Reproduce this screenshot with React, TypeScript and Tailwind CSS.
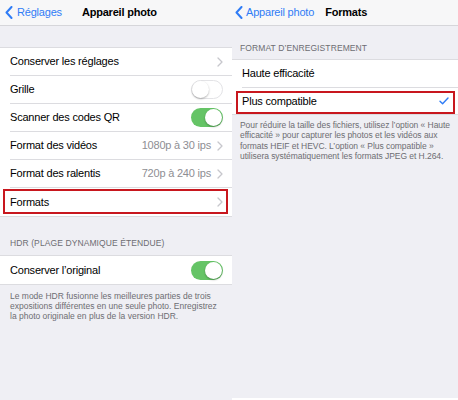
import React from "react";

const font = { fontFamily: "'Liberation Sans', Arial, sans-serif" };

const Chevron = () => (
  <svg width="6" height="10" viewBox="0 0 6 10" className="shrink-0">
    <path d="M1 1l4 4-4 4" fill="none" stroke="#c7c7cc" strokeWidth="1.3" strokeLinecap="round" strokeLinejoin="round" />
  </svg>
);

const BackChevron = () => (
  <svg width="8" height="13" viewBox="0 0 8 13" className="shrink-0">
    <path d="M6.5 1L1.5 6.5l5 5.5" fill="none" stroke="#2f7cf6" strokeWidth="2" strokeLinecap="round" strokeLinejoin="round" />
  </svg>
);

const Toggle = ({ on }: { on: boolean }) =>
  on ? (
    <div className="w-[32px] h-[19px] rounded-full bg-[#65c466] relative shrink-0">
      <div className="absolute right-[1px] top-[1px] w-[17px] h-[17px] rounded-full bg-white shadow-[0_1px_2px_rgba(0,0,0,0.3)]" />
    </div>
  ) : (
    <div className="w-[32px] h-[19px] rounded-full bg-white border border-[#e3e3e6] relative shrink-0">
      <div className="absolute left-0 top-0 w-[17px] h-[17px] rounded-full bg-white shadow-[0_1px_2px_rgba(0,0,0,0.3)]" />
    </div>
  );

const Row = ({
  label,
  value,
  right,
  last,
  h = "h-[28px]",
  boxed,
}: {
  label: string;
  value?: string;
  right?: React.ReactNode;
  last?: boolean;
  h?: string;
  boxed?: React.ReactNode;
}) => (
  <div className={`relative ${h} flex items-center pl-[10px]`}>
    <div className={`flex-1 h-full flex items-center pr-[9px] ${last ? "" : "border-b border-[#dcdce0]"}`}>
      <span className="flex-1 text-[11px] tracking-[-0.2px] text-black">{label}</span>
      {value && <span className="text-[11px] tracking-[-0.2px] text-[#8e8e93] mr-[6px]">{value}</span>}
      {right}
    </div>
    {boxed}
  </div>
);

export default function App() {
  return (
    <div className="w-[458px] h-[400px] flex bg-[#efeff4] overflow-hidden" style={font}>
      {/* Left panel */}
      <div className="w-[232px] h-full flex flex-col">
        <div className="h-[26px] bg-[#f7f7f8] border-b border-[#d6d6da] flex items-center pl-[5px]">
          <BackChevron />
          <span className="ml-[4px] text-[11px] tracking-[-0.2px] text-[#2f7cf6]">Réglages</span>
          <span className="ml-[20px] text-[11px] tracking-[-0.2px] font-bold text-black">Appareil photo</span>
        </div>
        <div className="h-[21px]" />
        <div className="bg-white border-y border-[#dcdce0]">
          <Row label="Conserver les réglages" right={<Chevron />} />
          <Row label="Grille" right={<Toggle on={false} />} />
          <Row label="Scanner des codes QR" right={<Toggle on />} />
          <Row label="Format des vidéos" value="1080p à 30 ips" right={<Chevron />} />
          <Row label="Format des ralentis" value="720p à 240 ips" right={<Chevron />} />
          <Row
            label="Formats"
            right={<Chevron />}
            last
            boxed={<div className="absolute left-[3px] right-[4px] top-[1px] bottom-[2px] border-2 border-[#c8171e]" />}
          />
        </div>
        <div className="h-[38px] flex items-end pl-[10px] pb-[5px] text-[8.5px] text-[#6d6d72] tracking-[0.1px]">
          HDR (PLAGE DYNAMIQUE ÉTENDUE)
        </div>
        <div className="bg-white border-y border-[#dcdce0]">
          <Row label="Conserver l’original" right={<Toggle on />} last />
        </div>
        <div className="px-[10px] pt-[6px] text-[8.5px] leading-[10px] text-[#6d6d72]">
          Le mode HDR fusionne les meilleures parties de trois expositions différentes en une seule photo. Enregistrez la photo originale en plus de la version HDR.
        </div>
      </div>

      {/* Right panel */}
      <div className="w-[226px] h-full flex flex-col">
        <div className="h-[26px] bg-[#f7f7f8] border-b border-[#d6d6da] flex items-center pl-[3px]">
          <BackChevron />
          <span className="ml-[3px] text-[11px] tracking-[-0.2px] text-[#2f7cf6]">Appareil photo</span>
          <span className="ml-[11px] text-[11px] tracking-[-0.2px] font-bold text-black">Formats</span>
        </div>
        <div className="h-[33px] flex items-end pl-[8px] pb-[4px] text-[8.5px] text-[#6d6d72] tracking-[0.1px]">
          FORMAT D’ENREGISTREMENT
        </div>
        <div className="bg-white border-y border-[#dcdce0]">
          <Row label="Haute efficacité" />
          <Row
            label="Plus compatible"
            h="h-[26px]"
            last
            right={
              <svg width="10" height="8" viewBox="0 0 10 8" className="shrink-0">
                <path d="M1 4.2l2.6 2.6L9 1" fill="none" stroke="#2f7cf6" strokeWidth="1.4" strokeLinecap="round" strokeLinejoin="round" />
              </svg>
            }
            boxed={<div className="absolute left-[4px] right-[3px] top-[3px] bottom-0 border-2 border-[#c8171e]" />}
          />
        </div>
        <div className="pl-[8px] pr-0 pt-[5px] text-[8.5px] tracking-[-0.05px] leading-[10.3px] text-[#6d6d72]">
          Pour réduire la taille des fichiers, utilisez l’option « Haute efficacité » pour capturer les photos et les vidéos aux formats HEIF et HEVC. L’option « Plus compatible » utilisera systématiquement les formats JPEG et H.264.
        </div>
        <div className="flex-1" />
        <div className="h-[2px] bg-white" />
      </div>
    </div>
  );
}
